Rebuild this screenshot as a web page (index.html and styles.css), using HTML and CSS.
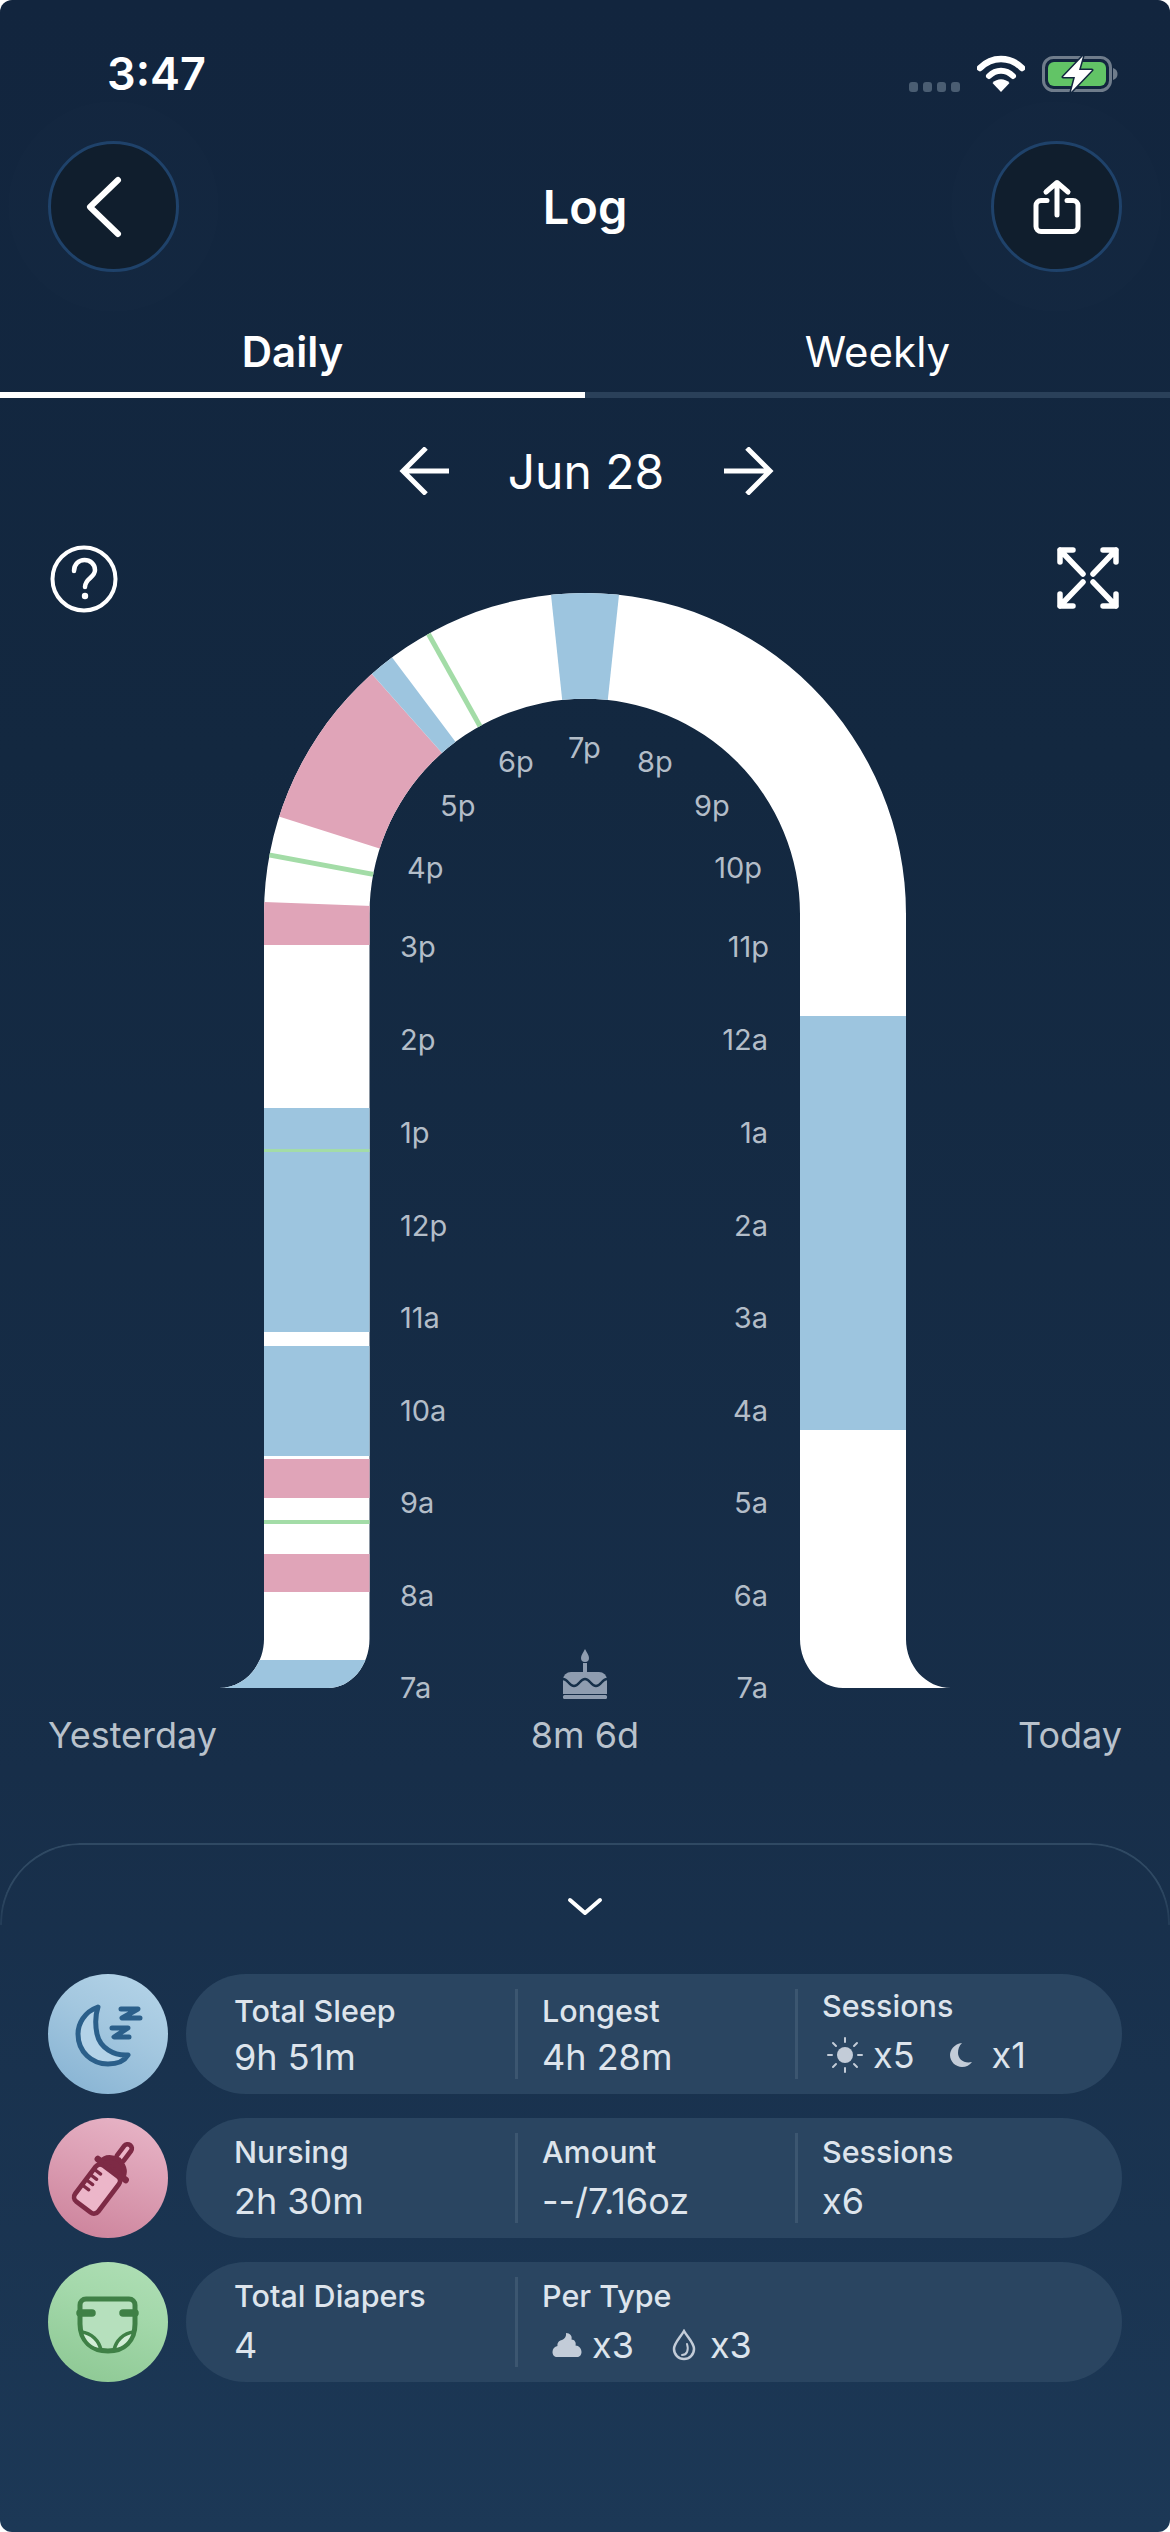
FILE: index.html
```html
<!DOCTYPE html>
<html lang="en">
<head>
    <meta charset="UTF-8">
    <meta name="viewport" content="width=device-width, initial-scale=1.0">
    <title>Log</title>
    <link rel="stylesheet" href="styles.css">
</head>
<body>
    <div class="screen">
        <div class="status-bar">
            <span class="time">3:47</span>
            <div class="status-icons">
                <div class="signal"><i></i><i></i><i></i><i></i></div>
                <svg class="wifi" width="48" height="38" viewBox="0 0 48 38">
                    <path d="M3 13 C15 1 33 1 45 13" fill="none" stroke="#fff" stroke-width="6.5" stroke-linecap="round"/>
                    <path d="M12 21 C19 14 29 14 36 21" fill="none" stroke="#fff" stroke-width="6" stroke-linecap="round"/>
                    <path d="M15.5 28 C20 23 28 23 32.5 28 L24 37 Z" fill="#fff"/>
                </svg>
                <svg class="battery" width="76" height="38" viewBox="0 0 76 38">
                    <rect x="1.5" y="2.5" width="67" height="33" rx="10" fill="none" stroke="#6f7c8b" stroke-width="3"/>
                    <rect x="6" y="7" width="58" height="24" rx="6" fill="#62c466"/>
                    <path d="M71 13 C74 14 75.500 16 75.500 19 C75.500 22 74 24 71 25 Z" fill="#6f7c8b"/>
                    <path d="M41 1 L21 22 H33 L29 37 L50 15 H37 Z" fill="#fff" stroke="#12263f" stroke-width="3" stroke-linejoin="round" paint-order="stroke"/>
                </svg>
            </div>
        </div>

        <header class="top-bar">
            <button class="round-btn">
                <svg class="back-icon" width="44" height="66" viewBox="0 0 44 66">
                    <path d="M35 6 L7 33 L35 60" fill="none" stroke="#fff" stroke-width="6" stroke-linecap="round" stroke-linejoin="round"/>
                </svg>
            </button>
            <h1 class="title">Log</h1>
            <button class="round-btn">
                <svg width="54" height="60" viewBox="0 0 54 60">
                    <path d="M17 23.500 H11 A5 5 0 0 0 6 28.500 V49.500 A5 5 0 0 0 11 54.500 H43 A5 5 0 0 0 48 49.500 V28.500 A5 5 0 0 0 43 23.500 H37" fill="none" stroke="#fff" stroke-width="5" stroke-linecap="round"/>
                    <path d="M27 38 V6 M16 15 L27 5.500 L38 15" fill="none" stroke="#fff" stroke-width="5" stroke-linecap="round" stroke-linejoin="round"/>
                </svg>
            </button>
        </header>

        <nav class="tabs">
            <div class="tab active">Daily</div>
            <div class="tab">Weekly</div>
        </nav>

        <div class="date-nav">
            <svg width="50" height="48" viewBox="0 0 50 48">
                <path d="M50 24 H4 M27 1 L4 24 L27 47" fill="none" stroke="#fff" stroke-width="5"/>
            </svg>
            <span class="date">Jun 28</span>
            <svg width="50" height="48" viewBox="0 0 50 48">
                <path d="M0 24 H46 M23 1 L46 24 L23 47" fill="none" stroke="#fff" stroke-width="5"/>
            </svg>
        </div>

        <div class="chart-tools">
            <svg width="68" height="68" viewBox="0 0 68 68">
                <circle cx="34" cy="34" r="31.500" fill="none" stroke="#fff" stroke-width="4"/>
                <path d="M24 26 C24 19 29 15 34.500 15 C40 15 45 19 45 25 C45 33 35 33 35 42" fill="none" stroke="#fff" stroke-width="4.500" stroke-linecap="round"/>
                <circle cx="35" cy="51" r="3.200" fill="#fff"/>
            </svg>
            <svg class="expand-icon" width="64" height="62" viewBox="0 0 64 62">
                <g fill="none" stroke="#fff" stroke-width="5.500" stroke-linecap="round" stroke-linejoin="round">
                    <path d="M4 15 V3 H17 M4 3 L27 27"/>
                    <path d="M60 15 V3 H47 M60 3 L37 27"/>
                    <path d="M4 47 V59 H17 M4 59 L27 35"/>
                    <path d="M60 47 V59 H47 M60 59 L37 35"/>
                </g>
            </svg>
        </div>

        <!-- viewBox uses screen coordinates, centre of the arch is 585,915 -->
        <svg class="chart" width="1170" height="1120" viewBox="0 590 1170 1120">
            <defs>
                <clipPath id="band">
                    <path d="M219 1689 C244 1689 264 1667 264 1640 V915 A321 321 0 0 1 906 915 V1640 C906 1667 926 1689 951 1689 H843 C820 1689 800 1667 800 1640 V915 A215.250 215.250 0 0 0 369.500 915 V1640 C369.500 1667 351 1689 328 1689 Z"/>
                </clipPath>
            </defs>
            <g clip-path="url(#band)">
                <rect x="200" y="580" width="780" height="1120" fill="#fff"/>

                <!-- today -->
                <rect x="800" y="1017" width="106" height="414" fill="#9dc5df"/>

                <!-- yesterday, bottom to top -->
                <rect x="200" y="1661" width="180" height="30" fill="#9dc5df"/>
                <rect x="264" y="1555" width="106" height="38" fill="#e0a4b8"/>
                <rect x="264" y="1521" width="106" height="4" fill="#a3dca7"/>
                <rect x="264" y="1460" width="106" height="39" fill="#e0a4b8"/>
                <rect x="264" y="1347" width="106" height="110" fill="#9dc5df"/>
                <rect x="264" y="1109" width="106" height="224" fill="#9dc5df"/>
                <rect x="264" y="1150" width="106" height="3" fill="#a3dca7"/>
                <polygon points="585,915 168,899.400 168,946 370,946 370,915" fill="#e0a4b8"/>
                <line x1="585" y1="915" x2="175.500" y2="838.400" stroke="#a3dca7" stroke-width="5"/>
                <polygon points="585,915 188,788.500 308,603" fill="#e0a4b8"/>
                <polygon points="585,915 308,603 334.750,582.200" fill="#9dc5df"/>
                <line x1="585" y1="915" x2="381.500" y2="551" stroke="#a3dca7" stroke-width="5"/>
                <polygon points="585,915 540.800,500 629.200,500" fill="#9dc5df"/>
            </g>

            <g class="hour-labels">
                <text x="400" y="1699">7a</text>
                <text x="400" y="1607">8a</text>
                <text x="400" y="1514">9a</text>
                <text x="400" y="1422">10a</text>
                <text x="400" y="1329">11a</text>
                <text x="400" y="1237">12p</text>
                <text x="400" y="1144">1p</text>
                <text x="400" y="1051">2p</text>
                <text x="400" y="958">3p</text>
                <text x="407" y="879">4p</text>
                <text x="440" y="817">5p</text>
                <text x="498" y="773">6p</text>
                <text x="568" y="759">7p</text>
                <text x="637" y="773">8p</text>
                <text x="694" y="817">9p</text>
            </g>
            <g class="hour-labels right">
                <text x="762" y="879">10p</text>
                <text x="769" y="958">11p</text>
                <text x="768" y="1051">12a</text>
                <text x="768" y="1144">1a</text>
                <text x="768" y="1237">2a</text>
                <text x="768" y="1329">3a</text>
                <text x="768" y="1422">4a</text>
                <text x="768" y="1514">5a</text>
                <text x="768" y="1607">6a</text>
                <text x="768" y="1699">7a</text>
            </g>

            <!-- cake -->
            <g fill="#8f9db0">
                <path d="M585 1650 C587 1654 589 1656 589 1659 A4 4 0 0 1 581 1659 C581 1656 583 1654 585 1650 Z"/>
                <rect x="583" y="1664" width="4" height="9"/>
                <path d="M563 1683 V1681 A8 8 0 0 1 571 1673 H599 A8 8 0 0 1 607 1681 V1683 L607 1695 H563 Z"/>
                <rect x="563" y="1696" width="44" height="4" rx="1.500"/>
            </g>
            <path d="M563 1680 C568 1680 569 1687 574 1687 C579 1687 580 1680 585 1680 C590 1680 591 1687 596 1687 C601 1687 602 1680 607 1680" fill="none" stroke="#16304a" stroke-width="2.500"/>
        </svg>

        <div class="chart-foot">
            <span>Yesterday</span>
            <span>8m 6d</span>
            <span class="foot-right">Today</span>
        </div>

        <section class="sheet">
            <div class="sheet-edge">
                <svg width="36" height="20" viewBox="0 0 36 20">
                    <path d="M3 3 L18 16 L33 3" fill="none" stroke="#fff" stroke-width="4" stroke-linecap="round" stroke-linejoin="round"/>
                </svg>
            </div>

            <div class="stat-rows">
                <div class="stat-row">
                    <div class="stat-icon sleep">
                        <svg width="120" height="120" viewBox="0 0 120 120">
                            <path d="M50 33 C36 38 30 50 30 60 C30 78 44 90 60 90 C70 90 77 86 80 81 C66 82 52 74 49 60 C47 50 47 42 50 33 Z" fill="#b4d3e8" stroke="#2b5f8a" stroke-width="5" stroke-linejoin="round"/>
                            <path d="M73 35 H90 L74 44 H92 M64 54 H80 L66 63 H81" fill="none" stroke="#2b5f8a" stroke-width="5" stroke-linecap="round" stroke-linejoin="round"/>
                        </svg>
                    </div>
                    <div class="stat-pill">
                        <div class="stat first low"><div class="stat-label">Total Sleep</div><div class="stat-value">9h 51m</div></div>
                        <div class="stat second low"><div class="stat-label">Longest</div><div class="stat-value">4h 28m</div></div>
                        <div class="stat third raised">
                            <div class="stat-label">Sessions</div>
                            <div class="stat-value counts">
                                <svg class="count-icon" width="36" height="36" viewBox="0 0 36 36">
                                    <circle cx="18" cy="18" r="8" fill="#c3ccd8"/>
                                    <path d="M18 1 V5 M18 31 V35 M1 18 H5 M31 18 H35 M6 6 L9 9 M27 27 L30 30 M6 30 L9 27 M27 9 L30 6" stroke="#c3ccd8" stroke-width="2" stroke-linecap="round"/>
                                </svg>
                                <span>x5</span>
                                <svg class="count-icon gap" width="24" height="26" viewBox="0 0 24 26">
                                    <path d="M13 1 C5 2 1 8 1 13 C1 20 7 25 13 25 C17 25 21 23 23 20 C15 22 9 17 9 11 C9 7 10 4 13 1 Z" fill="#c3ccd8"/>
                                </svg>
                                <span class="far">x1</span>
                            </div>
                        </div>
                    </div>
                </div>

                <div class="stat-row">
                    <div class="stat-icon nursing">
                        <svg width="120" height="120" viewBox="0 0 120 120">
                            <g transform="rotate(37 60 60) translate(1 3) scale(0.94)" stroke="#7d2a45" stroke-width="5" stroke-linecap="round" stroke-linejoin="round">
                                <path d="M56 36 V23 A4.500 4.500 0 0 1 65 23 V36" fill="#ecb6c9"/>
                                <path d="M46 52 C46 44 52 40 60.500 38 C69 40 75 44 75 52 Z" fill="#7d2a45"/>
                                <path d="M42 51 H79" stroke-width="7"/>
                                <rect x="45" y="53" width="31" height="48" rx="6" fill="#ecb6c9"/>
                                <path d="M45 62 H54 M45 69 H54 M45 76 H54 M45 83 H54" stroke-width="3.500"/>
                            </g>
                        </svg>
                    </div>
                    <div class="stat-pill">
                        <div class="stat first"><div class="stat-label">Nursing</div><div class="stat-value">2h 30m</div></div>
                        <div class="stat second"><div class="stat-label">Amount</div><div class="stat-value">--/7.16oz</div></div>
                        <div class="stat third"><div class="stat-label">Sessions</div><div class="stat-value">x6</div></div>
                    </div>
                </div>

                <div class="stat-row">
                    <div class="stat-icon diapers">
                        <svg width="120" height="120" viewBox="0 0 120 120">
                            <path d="M32 43 A6 6 0 0 1 38 37 H81 A6 6 0 0 1 87 43 V62 C87 79 76 89 60 89 C44 89 32 79 32 62 Z" fill="#b6e0bd" stroke="#3f8046" stroke-width="5"/>
                            <path d="M32 51 H44 M75 51 H87" stroke="#3f8046" stroke-width="7.500" stroke-linecap="round"/>
                            <path d="M33 70 C44 71 51 79 53 88 C43 87 36 80 33 70 Z M86 70 C75 71 68 79 66 88 C76 87 83 80 86 70 Z" fill="#d3eed7" stroke="#3f8046" stroke-width="3.500" stroke-linejoin="round"/>
                        </svg>
                    </div>
                    <div class="stat-pill">
                        <div class="stat first"><div class="stat-label">Total Diapers</div><div class="stat-value">4</div></div>
                        <div class="stat second plain">
                            <div class="stat-label">Per Type</div>
                            <div class="stat-value counts">
                                <svg class="count-icon poop" width="30" height="24" viewBox="0 0 30 24">
                                    <path d="M14 0 C18 0 20.500 3 19.500 6.500 C22.500 6.500 24.500 9.500 23.500 12.500 C27 12.500 29.500 15.500 29.500 19 C29.500 22 27.500 24 25 24 H5 C2.500 24 0.500 22 0.500 19 C0.500 16 2.500 13.500 5.500 13 C5 10 7 7.500 10 7 C12.500 6 14.500 3.500 14 0 Z" fill="#c3ccd8"/>
                                </svg>
                                <span>x3</span>
                                <svg class="count-icon gap-drop" width="24" height="32" viewBox="0 0 24 32">
                                    <path d="M12 2 C16 9 22 14 22 20 A10 10 0 0 1 2 20 C2 14 8 9 12 2 Z" fill="none" stroke="#c3ccd8" stroke-width="2.500"/>
                                    <path d="M15 15 C17 21 15 26 10 26" fill="none" stroke="#c3ccd8" stroke-width="2" stroke-linecap="round"/>
                                </svg>
                                <span class="far">x3</span>
                            </div>
                        </div>
                    </div>
                </div>
            </div>
        </section>
    </div>
</body>
</html>
```

FILE: styles.css
```css
* {
    margin: 0;
    padding: 0;
    box-sizing: border-box;
    font-family: 'Inter', 'Liberation Sans', sans-serif;
}

body {
    width: 1170px;
    height: 2532px;
    overflow: hidden;
    color: white;
    background: #fff;
}

.screen {
    height: 2532px;
    display: flex;
    flex-direction: column;
    border-radius: 12px;
    background: linear-gradient(180deg, #12253e 0%, #132840 30%, #172e49 70%, #1c3856 100%);
}

.status-bar {
    height: 141px;
    display: flex;
    justify-content: space-between;
    padding: 49px 52px 0 107px;
}

.time {
    font-size: 45px;
    font-weight: 600;
    line-height: 50px;
}

.status-icons {
    display: flex;
    align-items: flex-start;
    height: 38px;
    margin-top: 6px;
}

.signal {
    display: flex;
    gap: 5px;
    margin: 27px 17px 0 0;
}

.signal i {
    display: block;
    width: 9px;
    height: 10px;
    border-radius: 3px;
    background: #4a5d72;
}

.battery {
    margin-left: 17px;
}

.top-bar {
    display: flex;
    align-items: center;
    justify-content: space-between;
    padding: 0 48px;
}

.round-btn {
    width: 131px;
    height: 131px;
    display: flex;
    align-items: center;
    justify-content: center;
    border-radius: 50%;
    border: 3px solid #1f426a;
    background: #101e2d;
    box-shadow: 0 0 0 40px rgba(255, 255, 255, 0.008);
}

.back-icon {
    margin-right: 17px;
}

.title {
    font-size: 47px;
    font-weight: 600;
}

.tabs {
    display: flex;
    margin-top: 50px;
}

.tab {
    flex: 1;
    height: 76px;
    text-align: center;
    font-size: 42px;
    line-height: 60px;
    border-bottom: 6px solid #2a4059;
}

.tab.active {
    font-weight: 600;
    border-bottom-color: #fff;
}

.date-nav {
    display: flex;
    align-items: center;
    justify-content: center;
    gap: 54px;
    height: 56px;
    margin-top: 45px;
    padding-left: 2px;
}

.date {
    width: 167px;
    text-align: center;
    font-size: 48px;
    white-space: nowrap;
}

.chart-tools {
    display: flex;
    align-items: flex-start;
    justify-content: space-between;
    padding: 0 50px;
    height: 44px;
    margin-top: 46px;
}

.expand-icon {
    margin-top: 2px;
}

.chart {
    display: block;
    flex-shrink: 0;
}

.hour-labels text {
    font-size: 29px;
    fill: #b3bdc8;
}

.hour-labels.right text {
    text-anchor: end;
}

.chart-foot {
    display: grid;
    grid-template-columns: 1fr auto 1fr;
    padding: 0 48px;
    font-size: 36px;
    line-height: 44px;
    color: #b9c2cc;
    margin-top: 4px;
}

.foot-right {
    text-align: right;
}

.sheet {
    margin-top: 86px;
}

.sheet-edge {
    position: relative;
    height: 82px;
    display: flex;
    justify-content: center;
    padding-top: 54px;
}

.sheet-edge::before {
    content: "";
    position: absolute;
    inset: 0;
    border: 2px solid #2f4963;
    border-bottom: none;
    border-radius: 80px 80px 0 0;
    -webkit-mask-image: linear-gradient(180deg, #000 50%, rgba(0, 0, 0, 0.5) 100%);
}

.stat-rows {
    display: flex;
    flex-direction: column;
    gap: 24px;
    margin-top: 49px;
    padding: 0 48px;
}

.stat-row {
    display: flex;
    align-items: center;
    gap: 18px;
}

.stat-icon {
    width: 120px;
    height: 120px;
    border-radius: 50%;
    flex-shrink: 0;
}

.stat-icon svg {
    display: block;
}

.stat-icon.sleep {
    background: linear-gradient(30deg, #84b1d2 0%, #a3c7df 55%, #b6d5e9 100%);
}

.stat-icon.nursing {
    background: linear-gradient(20deg, #cb8099 0%, #dc9fb4 55%, #e9b7c9 100%);
}

.stat-icon.diapers {
    background: linear-gradient(20deg, #8cc792 0%, #a3d8aa 60%, #b0dfb6 100%);
}

.stat-pill {
    flex: 1;
    height: 120px;
    display: flex;
    align-items: center;
    border-radius: 60px;
    background: #2a4561;
}

.stat {
    height: 90px;
    display: flex;
    flex-direction: column;
    justify-content: center;
    gap: 9px;
    border-right: 3px solid #3c5670;
}

.stat.low {
    gap: 6px;
    padding-top: 3px;
}

.stat.first {
    width: 332px;
    padding-left: 48px;
}

.stat.second {
    width: 280px;
    padding-left: 24px;
}

.stat.third {
    padding-left: 24px;
    border-right: none;
}

.stat.plain {
    border-right: none;
}

.stat.raised {
    margin-top: -3px;
}

.stat-label {
    font-size: 30.5px;
    line-height: 36px;
    font-weight: 500;
    color: #dde4ec;
}

.stat-value {
    font-size: 36px;
    line-height: 44px;
    color: #dde4ec;
}

.counts {
    display: flex;
    align-items: center;
}

.count-icon {
    margin-left: 5px;
    margin-right: 10px;
}

.count-icon.poop {
    margin-left: 10px;
}

.count-icon.gap {
    margin-left: 34px;
    margin-right: 19px;
}

.count-icon.gap-drop {
    margin-left: 38px;
    margin-right: 14px;
}
```
